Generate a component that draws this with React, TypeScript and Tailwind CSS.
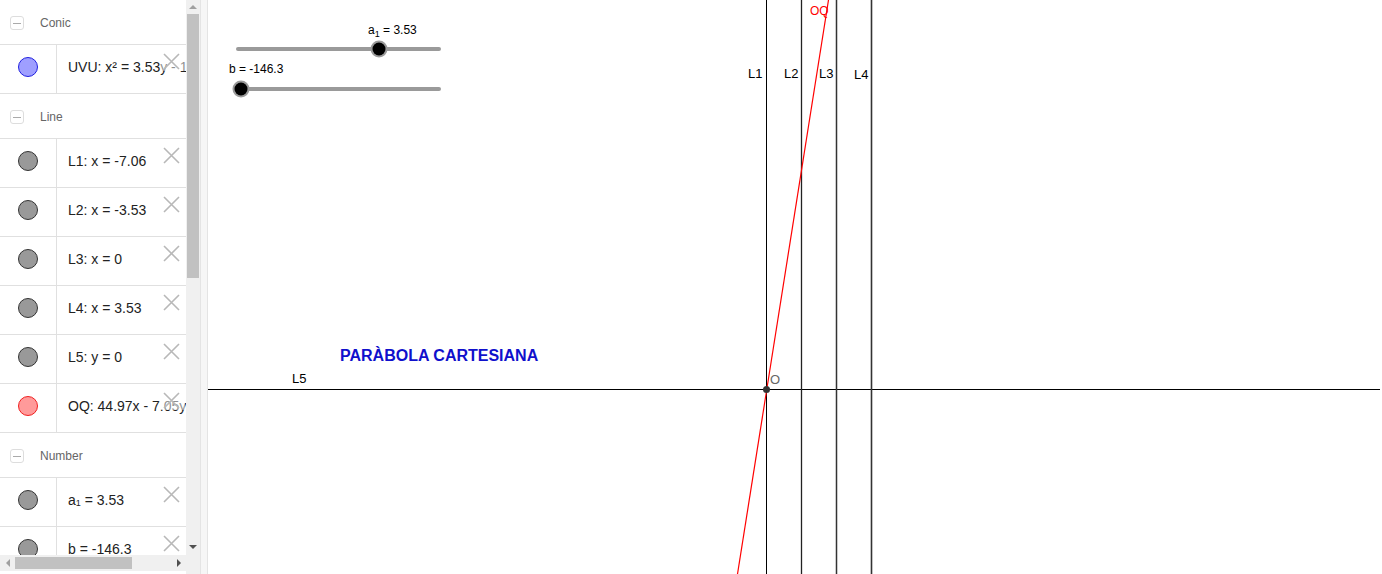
import React from 'react';

type Item = { color: 'gray' | 'blue' | 'red'; label: React.ReactNode };
type Group = { title: string; items: Item[] };

const groups: Group[] = [
  { title: 'Conic', items: [{ color: 'blue', label: 'UVU: x² = 3.53y - 13.06' }] },
  {
    title: 'Line',
    items: [
      { color: 'gray', label: 'L1: x = -7.06' },
      { color: 'gray', label: 'L2: x = -3.53' },
      { color: 'gray', label: 'L3: x = 0' },
      { color: 'gray', label: 'L4: x = 3.53' },
      { color: 'gray', label: 'L5: y = 0' },
      { color: 'red', label: 'OQ: 44.97x - 7.05y = 0' },
    ],
  },
  {
    title: 'Number',
    items: [
      {
        color: 'gray',
        label: (
          <>
            <span>a</span>
            <span className="relative top-[4px] text-[9px]">1</span>
            <span className="whitespace-pre"> = 3.53</span>
          </>
        ),
      },
      { color: 'gray', label: 'b = -146.3' },
    ],
  },
];

const dotClass: Record<Item['color'], string> = {
  gray: 'bg-[#999999] border-[#333333]',
  blue: 'bg-[#9f9fff] border-[#2020e0]',
  red: 'bg-[#ff9a9a] border-[#f02020]',
};

function CloseX() {
  return (
    <svg width="17" height="17" viewBox="0 0 17 17" className="absolute left-[163px] top-[8px]">
      <path d="M1 1 L16 16 M16 1 L1 16" stroke="#b8b8b8" strokeWidth="1.6" fill="none" />
    </svg>
  );
}

function Row({ item }: { item: Item }) {
  return (
    <div className="relative flex h-[49px] shrink-0 border-b border-[#e0e0e0]">
      <div className="flex w-[57px] shrink-0 items-center justify-center border-r border-[#e0e0e0] pb-[4px]">
        <div className={`h-[20px] w-[20px] rounded-full border ${dotClass[item.color]}`} />
      </div>
      <div className="flex items-center whitespace-nowrap pb-[4px] pl-[11px] text-[14px] text-[#222]">
        {item.label}
      </div>
      <div className="absolute left-[160px] top-0 h-[26px] w-[25px] bg-white/50" />
      <CloseX />
    </div>
  );
}

function GroupHeader({ title }: { title: string }) {
  return (
    <div className="flex h-[45px] shrink-0 items-center border-b border-[#e0e0e0] pt-[2px]">
      <div className="ml-[10px] flex h-[14px] w-[14px] items-center justify-center rounded-[3px] border border-[#dddddd]">
        <div className="h-px w-[8px] bg-[#aaaaaa]" />
      </div>
      <span className="ml-[16px] text-[12px] text-[#666666]">{title}</span>
    </div>
  );
}

function Sidebar() {
  return (
    <div className="flex h-full w-[200px] shrink-0">
      <div className="flex w-[186px] shrink-0 flex-col">
        <div className="flex-1 overflow-hidden">
          {groups.map((g) => (
            <div key={g.title}>
              <GroupHeader title={g.title} />
              {g.items.map((it, i) => (
                <Row key={i} item={it} />
              ))}
            </div>
          ))}
        </div>
        {/* horizontal scrollbar */}
        <div className="mb-[3px] flex h-[16px] shrink-0 items-center bg-[#f0f0f0]">
          <div className="flex w-[15px] items-center justify-center">
            <div className="h-0 w-0 border-y-[4px] border-r-[4px] border-y-transparent border-r-[#a0a0a0]" />
          </div>
          <div className="h-[12px] w-[117px] bg-[#c1c1c1]" />
          <div className="flex-1" />
          <div className="flex w-[15px] items-center justify-center">
            <div className="h-0 w-0 border-y-[4px] border-l-[4px] border-y-transparent border-l-[#505050]" />
          </div>
        </div>
      </div>
      {/* vertical scrollbar */}
      <div className="flex w-[14px] shrink-0 flex-col bg-[#f0f0f0]">
        <div className="flex h-[14px] items-center justify-center">
          <div className="h-0 w-0 border-x-[4px] border-b-[4px] border-x-transparent border-b-[#a0a0a0]" />
        </div>
        <div className="mx-[1px] h-[264px] bg-[#c1c1c1]" />
        <div className="flex-1" />
        <div className="mb-[20px] flex h-[14px] items-center justify-center">
          <div className="h-0 w-0 border-x-[4px] border-t-[4px] border-x-transparent border-t-[#505050]" />
        </div>
      </div>
    </div>
  );
}

function Graphics() {
  const font = { fontFamily: '"Liberation Sans", Arial, sans-serif' };
  return (
    <div className="h-full flex-1 overflow-hidden bg-white">
      <svg width="1174" height="574" viewBox="208 0 1174 574" style={font}>
        {/* sliders */}
        <line x1="238" y1="49" x2="439" y2="49" stroke="#9a9a9a" strokeWidth="4" strokeLinecap="round" />
        <circle cx="379" cy="49" r="8.5" fill="#9a9a9a" />
        <circle cx="379" cy="49" r="6.5" fill="#000" />
        <text x="368" y="34" fontSize="12" fill="#000">
          a<tspan fontSize="9" dy="3">1</tspan>
          <tspan dy="-3"> = 3.53</tspan>
        </text>
        <line x1="238" y1="89" x2="439" y2="89" stroke="#9a9a9a" strokeWidth="4" strokeLinecap="round" />
        <circle cx="241" cy="89" r="8.5" fill="#9a9a9a" />
        <circle cx="241" cy="89" r="6.5" fill="#000" />
        <text x="229" y="73" fontSize="12" fill="#000">b = -146.3</text>

        {/* lines */}
        <line x1="208" y1="389.5" x2="1380" y2="389.5" stroke="#000" strokeWidth="1" />
        <line x1="766.5" y1="0" x2="766.5" y2="574" stroke="#000" strokeWidth="1" />
        <line x1="801.5" y1="0" x2="801.5" y2="574" stroke="#222" strokeWidth="1.3" />
        <line x1="836.5" y1="0" x2="836.5" y2="574" stroke="#333" strokeWidth="1.5" />
        <line x1="871.5" y1="0" x2="871.5" y2="574" stroke="#333" strokeWidth="1.6" />
        <line x1="828.5" y1="0" x2="737.5" y2="574" stroke="#ff0000" strokeWidth="1.2" />

        <text x="748" y="78" fontSize="13" fill="#000">L1</text>
        <text x="784" y="78" fontSize="13" fill="#000">L2</text>
        <text x="819" y="78" fontSize="13" fill="#000">L3</text>
        <text x="854" y="79" fontSize="13" fill="#000">L4</text>
        <text x="292" y="383" fontSize="13" fill="#000">L5</text>
        <text x="810" y="15" fontSize="12" fill="#ff0000">OQ</text>

        <circle cx="766.5" cy="389.5" r="3.5" fill="#333" />
        <text x="770" y="384" fontSize="13" fill="#666">O</text>

        <text x="340" y="361" fontSize="16" fontWeight="bold" fill="#1010cc">
          PARÀBOLA CARTESIANA
        </text>
      </svg>
    </div>
  );
}

export default function App() {
  return (
    <div
      className="flex h-[574px] w-[1382px] overflow-hidden bg-white"
      style={{ fontFamily: '"Liberation Sans", Arial, sans-serif' }}
    >
      <Sidebar />
      <div className="h-full w-[8px] shrink-0 border-x border-[#e4e4e4] bg-[#f6f6f6]" />
      <Graphics />
    </div>
  );
}
